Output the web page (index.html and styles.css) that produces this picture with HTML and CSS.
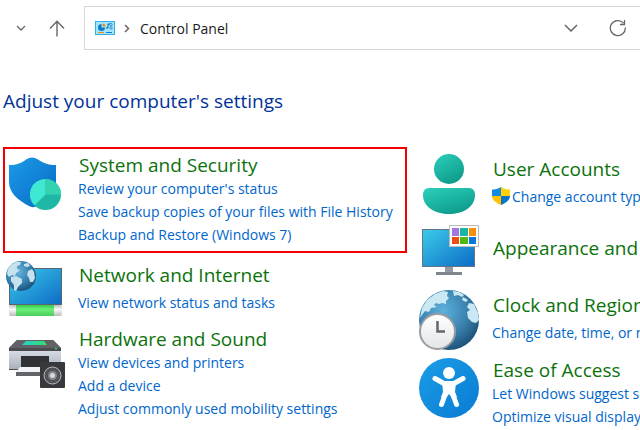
FILE: index.html
```html
<!DOCTYPE html>
<html lang="en">
<head>
  <meta charset="UTF-8" />
  <meta name="viewport" content="width=device-width, initial-scale=1.0"/>
  <title>Control Panel</title>
  <link rel="stylesheet" href="styles.css">
</head>
<body>

<header class="toolbar">
  <button class="tool-button recent-button" aria-label="Recent locations">
    <svg width="10" height="6" viewBox="0 0 10 6"><path d="M1 1l4 4 4-4" fill="none" stroke="#666" stroke-width="1.3"/></svg>
  </button>
  <button class="tool-button up-button" aria-label="Up">
    <svg width="16" height="17" viewBox="0 0 16 17"><path d="M8 16.500V1.500M1 8.500l7-7.300 7 7.300" fill="none" stroke="#666" stroke-width="1.4"/></svg>
  </button>
  <div class="address-bar">
    <svg class="address-icon" width="20" height="14" viewBox="0 0 20 14">
      <rect x=".5" y=".5" width="19" height="13" fill="#a5e5fb" stroke="#2eb2e8"/>
      <path d="M6.500 3A3.500 3.500 0 1 0 10 6.500H6.500z" fill="#0a7ccc"/>
      <path d="M7.500 2.500A3 3 0 0 1 10.500 5.500h-3z" fill="#f08c1a"/>
      <path d="M11 7h2V3h2" fill="none" stroke="#0a5fa8"/>
      <circle cx="16" cy="3.500" r="1.200" fill="none" stroke="#1685cc" stroke-width=".8"/>
      <circle cx="16" cy="7" r="1.200" fill="none" stroke="#1685cc" stroke-width=".8"/>
      <path d="M3 11.500h6" stroke="#f08c1a"/>
      <path d="M11 11.500h6" stroke="#0a7ccc"/>
    </svg>
    <svg class="crumb-arrow" width="6" height="9" viewBox="0 0 6 9"><path d="M1 1l3.500 3.500L1 8" fill="none" stroke="#666" stroke-width="1.500"/></svg>
    <a class="crumb" href="#">Control Panel</a>
    <button class="tool-button history-button" aria-label="Previous locations">
      <svg width="14" height="8" viewBox="0 0 14 8"><path d="M1 1l6 6 6-6" fill="none" stroke="#666" stroke-width="1.500"/></svg>
    </button>
    <button class="tool-button refresh-button" aria-label="Refresh">
      <svg width="18" height="18" viewBox="0 0 18 18"><path d="M16.300 8.500A7.500 7.500 0 1 1 14.500 4.200M15.500 1v4.500H11" fill="none" stroke="#666" stroke-width="1.300"/></svg>
    </button>
  </div>
</header>

<main class="content">
  <h1 class="page-title">Adjust your computer's settings</h1>

  <div class="categories">
    <div class="column">
      <section class="category tall highlighted">
        <svg class="category-icon" viewBox="0 0 60 60">
          <defs>
            <linearGradient id="shieldBlue" x1="0" y1="0" x2="1" y2="1"><stop offset="0" stop-color="#1d9be8"/><stop offset="1" stop-color="#0669c4"/></linearGradient>
          </defs>
          <path d="M4 12C12 12 17 10 21 6.500Q27 2.500 33 6.500C38 10 43 12 51 12V29c0 11-9 19-20 24.500Q27 55 24 53C13 47 4 40 4 29z" fill="url(#shieldBlue)"/>
          <circle cx="40.500" cy="41.500" r="15.500" fill="#1fb8a6"/>
          <path d="M40.500 41.500V26A15.500 15.500 0 0 0 29.500 52.500z" fill="#3ee8d2"/>
          <path d="M40.500 41.500V26A15.500 15.500 0 0 1 56 41.500z" fill="#34d3af"/>
        </svg>
        <div class="category-text">
          <h2 class="category-title"><a href="#">System and Security</a></h2>
          <a class="task" href="#">Review your computer's status</a>
          <a class="task" href="#">Save backup copies of your files with File History</a>
          <a class="task" href="#">Backup and Restore (Windows 7)</a>
        </div>
      </section>

      <section class="category single">
        <svg class="category-icon" viewBox="0 0 60 60">
          <defs>
            <linearGradient id="screenBlue" x1="0" y1="0" x2="1" y2="1"><stop offset="0" stop-color="#3ccbe9"/><stop offset="1" stop-color="#0c6bc6"/></linearGradient>
            <linearGradient id="cableGreen" x1="0" y1="0" x2="0" y2="1"><stop offset="0" stop-color="#36c84d"/><stop offset=".4" stop-color="#6bef79"/><stop offset="1" stop-color="#4ccc5c"/></linearGradient>
            <linearGradient id="cableGrey" x1="0" y1="0" x2="0" y2="1"><stop offset="0" stop-color="#bbb"/><stop offset=".4" stop-color="#fafafa"/><stop offset="1" stop-color="#bbb"/></linearGradient>
            <radialGradient id="globeSmall" cx=".4" cy=".35" r=".7"><stop offset="0" stop-color="#69b5dc"/><stop offset=".6" stop-color="#347fac"/><stop offset="1" stop-color="#164d75"/></radialGradient>
          </defs>
          <rect x="4.500" y="8.500" width="52" height="36" fill="url(#screenBlue)" stroke="#5b6570"/>
          <rect x="4" y="45" width="53" height="11" rx="2" fill="url(#cableGrey)"/>
          <rect x="11" y="45" width="38" height="11" fill="url(#cableGreen)"/>
          <circle cx="16" cy="16" r="15" fill="url(#globeSmall)"/>
          <path d="M3 9l3-4 5-3 5 0-1 3-3 1 0 3 3 1-4 3-1 3-3-1-3 2-2-3zM6 17l5-1 6 3 0 4-4 4-2 4-2-1 0-5-3-4zM19 4l4-1 2 3-3 1-3-1zM23 11l4-2 2 3 1 6-2 4-3 0-1-4-2-3z" fill="#c6e2ef"/>
        </svg>
        <div class="category-text">
          <h2 class="category-title"><a href="#">Network and Internet</a></h2>
          <a class="task" href="#">View network status and tasks</a>
        </div>
      </section>

      <section class="category tall">
        <svg class="category-icon" viewBox="0 0 60 60">
          <defs>
            <linearGradient id="printerBody" x1="0" y1="0" x2="0" y2="1"><stop offset="0" stop-color="#d5dbe3"/><stop offset="1" stop-color="#a9b1bb"/></linearGradient>
            <linearGradient id="printerLight" x1="0" y1="0" x2="1" y2="0"><stop offset="0" stop-color="#28cfd4"/><stop offset="1" stop-color="#35df69"/></linearGradient>
          </defs>
          <path d="M12 13h36l8 8v22H4V21z" fill="#4a4c4f"/>
          <path d="M12 13h36l8 8H4z" fill="#606266"/>
          <path d="M21 14h18l3 4H17z" fill="url(#printerLight)"/>
          <rect x="4" y="24" width="52" height="18" fill="url(#printerBody)"/>
          <circle cx="51" cy="21.500" r="1" fill="#33df54"/>
          <rect x="16" y="29" width="28" height="11" fill="#303236"/>
          <path d="M15 40h29l-3 5H11z" fill="#f3f4f6"/>
          <path d="M11 45h25v4H11z" fill="#626469"/>
          <rect x="35" y="35" width="25" height="26" rx="1" fill="#38393c"/>
          <circle cx="47.500" cy="48.500" r="8.500" fill="#505256" stroke="#b8babe"/>
          <circle cx="47.500" cy="48.500" r="4.500" fill="#84878b"/>
          <circle cx="47.500" cy="48.500" r="2.500" fill="#d8dadd"/>
        </svg>
        <div class="category-text">
          <h2 class="category-title"><a href="#">Hardware and Sound</a></h2>
          <a class="task" href="#">View devices and printers</a>
          <a class="task" href="#">Add a device</a>
          <a class="task" href="#">Adjust commonly used mobility settings</a>
        </div>
      </section>
    </div>

    <div class="column column-right">
      <section class="category single">
        <svg class="category-icon" viewBox="0 0 60 60">
          <defs>
            <linearGradient id="userTeal" x1="0" y1="0" x2=".6" y2="1"><stop offset="0" stop-color="#2bd0bc"/><stop offset="1" stop-color="#0f9c8c"/></linearGradient>
          </defs>
          <circle cx="30" cy="15" r="15" fill="url(#userTeal)"/>
          <path d="M10 34h40c4 0 6 3 6 7 0 12-12 19-26 19S4 53 4 41c0-4 2-7 6-7z" fill="url(#userTeal)"/>
        </svg>
        <div class="category-text">
          <h2 class="category-title"><a href="#">User Accounts</a></h2>
          <a class="task task-admin" href="#">
            <svg class="uac-icon" width="18" height="18" viewBox="0 0 18 18">
              <path d="M9 0C6 2 3 2.500 0 2.500V9h9z" fill="#1089df"/>
              <path d="M9 0c3 2 6 2.500 9 2.500V9H9z" fill="#ffd00c"/>
              <path d="M0 9c0 4 4 7 9 9V9z" fill="#ffc100"/>
              <path d="M18 9c0 4-4 7-9 9V9z" fill="#0873cb"/>
            </svg>
            Change account type
          </a>
        </div>
      </section>

      <section class="category title-only">
        <svg class="category-icon" viewBox="0 0 60 60">
          <rect x="3.500" y="7.500" width="52" height="37" fill="url(#screenBlue)" stroke="#657482"/>
          <path d="M26 45h8v5h-8z" fill="#929ba4"/>
          <path d="M17 50h26v3H17z" fill="#7e8790"/>
          <rect x="30.500" y="3.500" width="29" height="21" fill="#fff" stroke="#bbb"/>
          <path d="M33 6h7v8h-7z" fill="#a076df"/>
          <path d="M41 6h8v8h-8z" fill="#19b5a5"/>
          <path d="M50 6h7v8h-7z" fill="#f4900b"/>
          <path d="M33 15h7v7h-7z" fill="#e74f13"/>
          <path d="M41 15h8v7h-8z" fill="#55b60f"/>
          <path d="M50 15h7v7h-7z" fill="#0878d6"/>
        </svg>
        <div class="category-text">
          <h2 class="category-title"><a href="#">Appearance and Personalization</a></h2>
        </div>
      </section>

      <section class="category single">
        <svg class="category-icon" viewBox="0 0 60 60">
          <defs>
            <radialGradient id="globeLarge" cx=".4" cy=".35" r=".7"><stop offset="0" stop-color="#5eb2de"/><stop offset=".6" stop-color="#397fac"/><stop offset="1" stop-color="#194e74"/></radialGradient>
            <linearGradient id="clockFace" x1="0" y1="0" x2="0" y2="1"><stop offset="0" stop-color="#fff"/><stop offset="1" stop-color="#e3e5e8"/></linearGradient>
          </defs>
          <circle cx="30" cy="30" r="30" fill="url(#globeLarge)"/>
          <path d="M3 18L8 10l8-6 8-3 5 1-1 4 2 2-3 3 0 3-4-1-3 1-3-1-2 2 3 2-6 1-2 4-4-1-3 4-2 3zM34 1l6 1 5 3-2 2-4-2-4 1zM50 13l5 1 4 9 1 7-3 3-4-1-4-4-1-6 3-2-3-3z" fill="#c9e8f3"/>
          <path d="M44 7l5 3-2 2-4-2z" fill="#c9e8f3"/>
          <circle cx="18.500" cy="41.500" r="17.500" fill="url(#clockFace)" stroke="#999ca1" stroke-width="2"/>
          <path d="M18.500 31v10.500H26" fill="none" stroke="#63666b" stroke-width="2.500"/>
        </svg>
        <div class="category-text">
          <h2 class="category-title"><a href="#">Clock and Region</a></h2>
          <a class="task" href="#">Change date, time, or number formats</a>
        </div>
      </section>

      <section class="category tall">
        <svg class="category-icon" viewBox="0 0 60 60">
          <defs>
            <linearGradient id="accessBlue" x1="0" y1="0" x2="1" y2="1"><stop offset="0" stop-color="#1c9de6"/><stop offset="1" stop-color="#087bd3"/></linearGradient>
          </defs>
          <circle cx="30" cy="30" r="30" fill="url(#accessBlue)"/>
          <circle cx="30" cy="15" r="6" fill="#fff"/>
          <path d="M16 20.500l9 5h10l9-5M27 34l-4.500 12.500M33 34l4.500 12.500" fill="none" stroke="#fff" stroke-width="5" stroke-linecap="round" stroke-linejoin="round"/>
          <path d="M23 24h14l-1 10 2 5-5 1-3-4-3 4-5-1 2-5z" fill="#fff"/>
        </svg>
        <div class="category-text">
          <h2 class="category-title"><a href="#">Ease of Access</a></h2>
          <a class="task" href="#">Let Windows suggest settings</a>
          <a class="task" href="#">Optimize visual display</a>
        </div>
      </section>
    </div>
  </div>
</main>

</body>
</html>
```
FILE: styles.css
```css
* {
  box-sizing: border-box;
}

body {
  font-family: 'Segoe UI', 'Open Sans', 'Noto Sans', sans-serif;
  font-size: 14px;
  margin: 0;
  background-color: #fff;
  overflow: hidden;
}

a {
  text-decoration: none;
}

a:hover {
  text-decoration: underline;
}

.toolbar {
  display: flex;
  align-items: center;
  padding-top: 6px;
}

.tool-button {
  display: flex;
  align-items: center;
  justify-content: center;
  padding: 0;
  border: none;
  background: none;
}

.recent-button {
  width: 42px;
  height: 28px;
}

.up-button {
  width: 30px;
  height: 28px;
  margin-right: 12px;
}

.address-bar {
  flex: 1;
  display: flex;
  align-items: center;
  height: 44px;
  padding: 0 13px 0 10px;
  border: 1px solid #d9d9d9;
  border-right: none;
}

.crumb-arrow {
  margin: 0 10px 0 9px;
}

.crumb {
  flex: 1;
  color: #1a1a1a;
}

.history-button {
  width: 28px;
  height: 28px;
  margin-right: 24px;
}

.content {
  padding: 37px 0 0 3px;
}

.page-title {
  margin: 0 0 32px;
  font-size: 19px;
  font-weight: 400;
  line-height: 28px;
  color: #003399;
}

.categories {
  display: grid;
  grid-template-columns: 404fr 223fr;
  gap: 10px;
}

.column {
  display: flex;
  flex-direction: column;
  gap: 7px;
  min-width: 0;
  white-space: nowrap;
}

.column-right {
  gap: 8px;
  padding-top: 7px;
  overflow: hidden;
}

.category {
  display: flex;
  align-items: center;
  gap: 13px;
  padding: 0 2px;
}

.category.tall {
  align-items: flex-start;
}

.category.highlighted {
  padding: 4px 0 5px;
  border: 2px solid #f00000;
}

.category-icon {
  flex: none;
  width: 60px;
  height: 60px;
  overflow: visible;
}

.category-title {
  margin: 0;
  padding-left: 1px;
  font-size: 19px;
  font-weight: 400;
  line-height: 24px;
}

.category-title a {
  color: #0b720b;
}

.single .category-text {
  padding-bottom: 4px;
}

.single .category-title {
  margin-bottom: 4px;
}

.title-only .category-text {
  padding-bottom: 9px;
}

.task {
  display: block;
  line-height: 23px;
  color: #0066cc;
}

.task-admin {
  display: flex;
  align-items: center;
  gap: 2px;
}
```
